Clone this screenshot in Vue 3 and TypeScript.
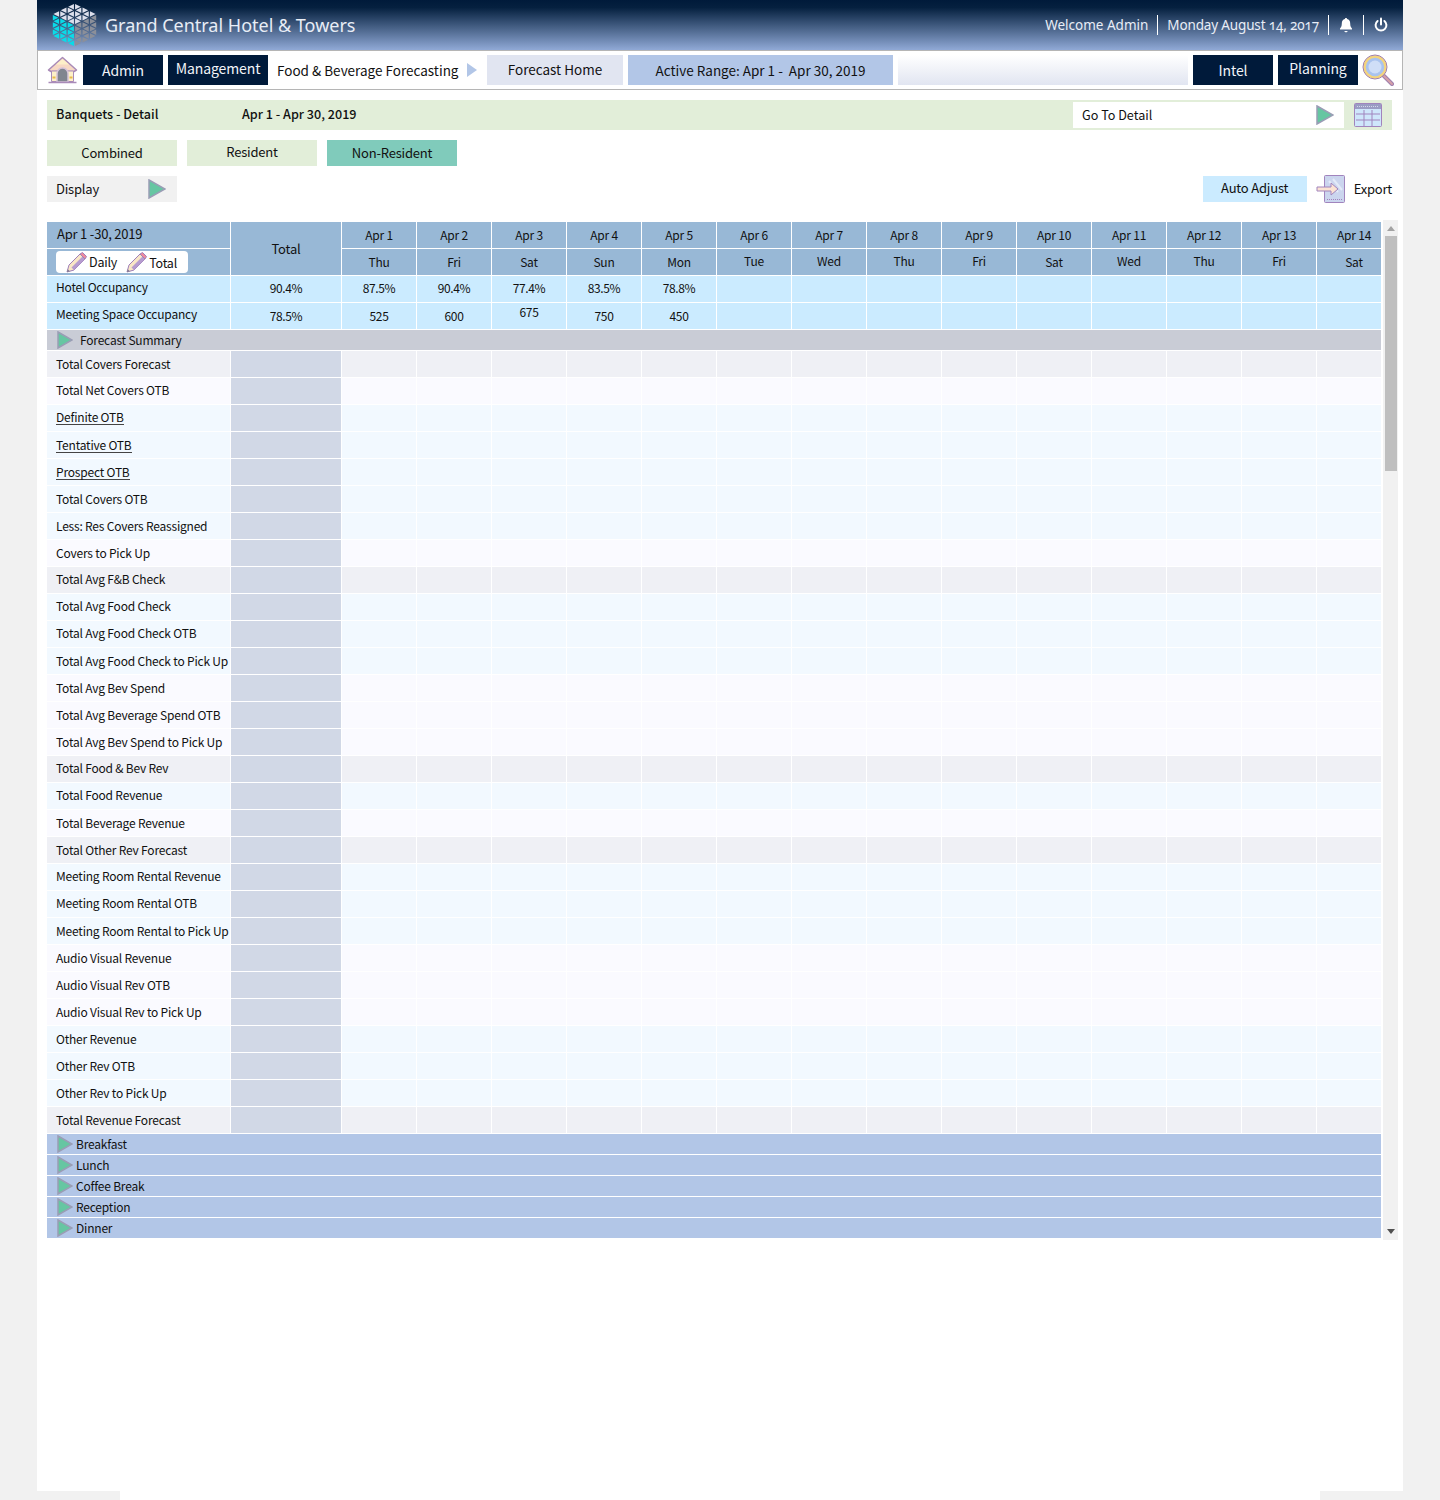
<script setup lang="ts">
const lowWeekdays = [0, 1, 2, 3, 4, 9, 13]
const days = ['Thu', 'Fri', 'Sat', 'Sun', 'Mon', 'Tue', 'Wed', 'Thu', 'Fri', 'Sat', 'Wed', 'Thu', 'Fri', 'Sat'].map(
  (weekday, i) => ({ date: `Apr ${i + 1}`, weekday, low: lowWeekdays.includes(i) }),
)

const occupancy = [
  { label: 'Hotel Occupancy', total: '90.4%', values: ['87.5%', '90.4%', '77.4%', '83.5%', '78.8%'], high: true },
  { label: 'Meeting Space Occupancy', total: '78.5%', values: ['525', '600', '675', '750', '450'], high: false },
]

// g = grey total row, l = lavender, b = light blue
const rows: [string, string, boolean?][] = [
  ['Total Covers Forecast', 'g'],
  ['Total Net Covers OTB', 'l'],
  ['Definite OTB', 'b', true],
  ['Tentative OTB', 'b', true],
  ['Prospect OTB', 'b', true],
  ['Total Covers OTB', 'b'],
  ['Less: Res Covers Reassigned', 'b'],
  ['Covers to Pick Up', 'l'],
  ['Total Avg F&B Check', 'g'],
  ['Total Avg Food Check', 'b'],
  ['Total Avg Food Check OTB', 'b'],
  ['Total Avg Food Check to Pick Up', 'b'],
  ['Total Avg Bev Spend', 'l'],
  ['Total Avg Beverage Spend OTB', 'l'],
  ['Total Avg Bev Spend to Pick Up', 'l'],
  ['Total Food & Bev Rev', 'g'],
  ['Total Food Revenue', 'b'],
  ['Total Beverage Revenue', 'l'],
  ['Total Other Rev Forecast', 'g'],
  ['Meeting Room Rental Revenue', 'b'],
  ['Meeting Room Rental OTB', 'b'],
  ['Meeting Room Rental to Pick Up', 'b'],
  ['Audio Visual Revenue', 'l'],
  ['Audio Visual Rev OTB', 'l'],
  ['Audio Visual Rev to Pick Up', 'l'],
  ['Other Revenue', 'b'],
  ['Other Rev OTB', 'b'],
  ['Other Rev to Pick Up', 'b'],
  ['Total Revenue Forecast', 'g'],
]

// these labels sit a pixel higher in their row
const raised = new Set([
  'Total Net Covers OTB', 'Definite OTB', 'Total Avg F&B Check', 'Total Avg Food Check',
  'Total Avg Food Check OTB', 'Total Food & Bev Rev', 'Total Food Revenue',
  'Meeting Room Rental Revenue', 'Meeting Room Rental OTB',
])

const groups = ['Breakfast', 'Lunch', 'Coffee Break', 'Reception', 'Dinner']

// logo: pointy-top hexagon cut into triangles with a vertical edge
const side = 8
const w = (side * Math.sqrt(3)) / 2
const logo: { points: string; fill: string }[] = []
for (let i = -3; i < 3; i++) {
  for (let n = -5; n < 5; n++) {
    const odd = (k: number) => (Math.abs(k) % 2) / 2
    const y1 = (n + odd(i)) * side
    const y2 = (n + odd(i + 1)) * side
    const tris = [
      [[i * w, y1], [i * w, y1 + side], [(i + 1) * w, y1 + side / 2]],
      [[(i + 1) * w, y2], [(i + 1) * w, y2 + side], [i * w, y2 + side / 2]],
    ]
    for (const t of tris) {
      const cx = (t[0][0] + t[1][0] + t[2][0]) / 3
      const cy = (t[0][1] + t[1][1] + t[2][1]) / 3
      const slope = (Math.abs(cx) * (side / 2)) / w
      if (Math.abs(cy) + slope > 3 * side) continue
      let fill = cx < 0 ? '#0adbe8' : '#8b8f99'
      if (-cy > slope) fill = '#dcdfec'
      logo.push({
        points: t.map(p => `${(cx + (p[0] - cx) * 0.76).toFixed(2)},${(cy + (p[1] - cy) * 0.76).toFixed(2)}`).join(' '),
        fill,
      })
    }
  }
}
</script>

<template>
  <div class="page">
    <header class="header">
      <svg class="logo" viewBox="-21 -24 42 48" preserveAspectRatio="none">
        <polygon v-for="(t, i) in logo" :key="i" :points="t.points" :fill="t.fill" />
      </svg>
      <div class="hotel">Grand Central Hotel &amp; Towers</div>
      <div class="welcome">Welcome Admin</div>
      <div class="date">Monday August 14, 2017</div>
      <div class="head-icon">
        <svg width="16" height="16" viewBox="0 0 16 16">
          <path d="M8 1c.7 0 1.100.5 1.100 1.100 2 .5 3.100 2.200 3.100 4.400 0 2.700.6 3.700 1.800 5v1H2v-1c1.200-1.300 1.800-2.300 1.800-5 0-2.200 1.100-3.900 3.100-4.400C6.900 1.500 7.300 1 8 1zM6.300 14h3.400c-.2.800-.9 1.300-1.700 1.300S6.500 14.800 6.300 14z" fill="#fff" />
        </svg>
      </div>
      <div class="head-icon last">
        <svg width="16" height="16" viewBox="0 0 16 16" fill="none" stroke="#fff" stroke-width="2" stroke-linecap="round">
          <path d="M8 1.500v6" />
          <path d="M4.600 4a5.400 5.400 0 1 0 6.800 0" />
        </svg>
      </div>
    </header>

    <nav class="nav">
      <svg class="home" width="31" height="28" viewBox="0 0 31 28">
        <path d="M1.500 14 15.500 1.500 29.500 14l-2.500 1.500H4z" fill="#f7d9c4" stroke="#a98bb8" stroke-width="1.500" stroke-linejoin="round" />
        <path d="M9 8.500 15.500 3 22 8.500z" fill="#fdf0c8" />
        <path d="M4.500 15h22v10.500h-22z" fill="#fdf0c8" stroke="#a98bb8" />
        <path d="M10 26V17.500a5.500 5.500 0 0 1 11 0V26z" fill="#80858f" stroke="#d5c3d8" stroke-width="1.500" />
        <path d="M5.500 20.500h3v2h-3zM22.500 20.500h3v2h-3z" fill="#e8b94a" />
        <path d="M1.500 26.500h28" stroke="#a98bb8" stroke-width="1.500" />
      </svg>
      <div class="nav-dark admin">Admin</div>
      <div class="nav-dark mgmt"><span class="lift2">Management</span></div>
      <div class="crumb">Food &amp; Beverage Forecasting</div>
      <svg class="crumb-arrow" width="10" height="14" viewBox="0 0 10 14"><path d="M0 0l10 7-10 7z" fill="#b2c6e7" /></svg>
      <div class="forecast-home">Forecast Home</div>
      <div class="active-range">Active Range: Apr 1 -&nbsp; Apr 30, 2019</div>
      <div class="nav-fill"></div>
      <div class="nav-dark admin">Intel</div>
      <div class="nav-dark admin"><span class="lift2">Planning</span></div>
      <svg class="glass" width="32" height="32" viewBox="0 0 32 32">
        <path d="M22 22l8 8" stroke="#9f7fae" stroke-width="4" stroke-linecap="round" />
        <path d="M22 22l8 8" stroke="#d6a0a8" stroke-width="2" stroke-linecap="round" />
        <circle cx="13" cy="13" r="10.500" fill="#a9c3ee" stroke="#f4d47c" stroke-width="2.500" />
        <circle cx="13" cy="13" r="12" fill="none" stroke="#9f7fae" stroke-width="1" />
        <circle cx="13" cy="13" r="6.500" fill="#cfdef7" />
      </svg>
    </nav>

    <section class="content">
      <div class="title-bar">
        <div class="title">Banquets - Detail</div>
        <div class="title-range">Apr 1 - Apr 30, 2019</div>
        <div class="goto">
          <span class="lift1">Go To Detail</span>
          <svg class="play" width="18" height="20" viewBox="0 0 18 20"><path d="M1 1l16 9-16 9z" fill="#66c6a2" stroke="#9a9db5" stroke-width="1.500" /></svg>
        </div>
        <svg class="calendar" width="28" height="24" viewBox="0 0 28 24">
          <rect x=".5" y=".5" width="27" height="23" rx="1" fill="#cfe6fb" stroke="#a184bd" />
          <path d="M1 1h26v5H1z" fill="#9b9dc4" />
          <path d="M3 3.500h22" stroke="#d5d8ea" stroke-dasharray="1 1" />
          <path d="M2 11h24M2 17h24M10 7v16M18 7v16" stroke="#a184bd" fill="none" />
        </svg>
      </div>

      <div class="tabs">
        <div class="tab">Combined</div>
        <div class="tab"><span class="lift1">Resident</span></div>
        <div class="tab current">Non-Resident</div>
      </div>

      <div class="tools">
        <div class="display">
          <span class="lift1">Display</span>
          <svg width="18" height="20" viewBox="0 0 18 20"><path d="M1 1l16 9-16 9z" fill="#66c6a2" stroke="#9a9db5" stroke-width="1.500" /></svg>
        </div>
        <div class="auto-adjust"><span class="lift1">Auto Adjust</span></div>
        <svg class="export-icon" width="30" height="28" viewBox="0 0 30 28">
          <rect x="8.500" y=".5" width="20" height="27" rx="1" fill="#cbd5ee" stroke="#a184bd" />
          <path d="M13 6l9 11M17 4l9 11" stroke="#e3eaf8" stroke-width="2" />
          <path d="M11 24.500h15" stroke="#a184bd" stroke-dasharray="1 1" />
          <path d="M1 12h14V8l7 6-7 6v-4H1z" fill="#fbe3d3" stroke="#a184bd" stroke-linejoin="round" />
        </svg>
        <div class="export lift1">Export</div>
      </div>

      <div class="table-wrap">
        <div class="grid">
          <div class="cell head label-cell range"><span class="lift1">Apr 1 -30, 2019</span></div>
          <div class="cell head total-head">Total</div>
          <div
            v-for="(d, i) in days"
            :key="d.date"
            class="cell head center"
            :class="{ 'last-day': i === 13 }"
          >
            {{ d.date }}
          </div>

          <div class="cell head toggle-cell">
            <div class="toggle">
              <svg width="21" height="21" viewBox="0 0 21 21">
                <path d="M1 20l2-7L14 2l5 5L8 18z" fill="#f9e7c6" stroke="#9f7fb8" stroke-linejoin="round" />
                <path d="M5.500 15.500 16.500 4.500 19 7 8 18z" fill="#b69ccf" />
                <path d="M14 2l2.500-1.500 4 4L19 7z" fill="#ef8a9c" stroke="#9f7fb8" stroke-linejoin="round" />
                <path d="M1 20l.8-2.800 2 2z" fill="#807a8c" />
              </svg>
              <span class="toggle-a">Daily</span>
              <svg width="21" height="21" viewBox="0 0 21 21">
                <path d="M1 20l2-7L14 2l5 5L8 18z" fill="#f9e7c6" stroke="#9f7fb8" stroke-linejoin="round" />
                <path d="M5.500 15.500 16.500 4.500 19 7 8 18z" fill="#b69ccf" />
                <path d="M14 2l2.500-1.500 4 4L19 7z" fill="#ef8a9c" stroke="#9f7fb8" stroke-linejoin="round" />
                <path d="M1 20l.8-2.800 2 2z" fill="#807a8c" />
              </svg>
              <span class="toggle-b">Total</span>
            </div>
          </div>
          <div
            v-for="(d, i) in days"
            :key="d.weekday + d.date"
            class="cell head center"
            :class="{ 'last-day': i === 13 }"
          >
            <span :class="{ lift1: !d.low }">{{ d.weekday }}</span>
          </div>

          <template v-for="o in occupancy" :key="o.label">
            <div class="cell occ label-cell"><span class="lift2">{{ o.label }}</span></div>
            <div class="cell occ center num"><span :class="{ lift1: o.high }">{{ o.total }}</span></div>
            <div v-for="(d, i) in days" :key="d.date" class="cell occ center num">
              <span :class="{ shifted: o.values[i] === '675', lift1: o.high }">{{ o.values[i] }}</span>
            </div>
          </template>

          <div class="band summary">
            <svg width="16" height="18" viewBox="0 0 16 18"><path d="M1 1l14 8-14 8z" fill="#66c6a2" stroke="#9a9db5" stroke-width="1.500" /></svg>
            <span class="summary-text">Forecast Summary</span>
          </div>

          <template v-for="r in rows" :key="r[0]">
            <div class="cell label-cell" :class="'row-' + r[1]">
              <span :class="{ link: r[2], lift1: raised.has(r[0]) }">{{ r[0] }}</span>
            </div>
            <div class="cell total-col"></div>
            <div v-for="d in days" :key="d.date" class="cell" :class="'row-' + r[1]"></div>
          </template>

          <div v-for="g in groups" :key="g" class="band group">
            <svg width="16" height="18" viewBox="0 0 16 18"><path d="M1 1l14 8-14 8z" fill="#66c6a2" stroke="#9a9db5" stroke-width="1.500" /></svg>
            <span>{{ g }}</span>
          </div>
        </div>

        <div class="scrollbar">
          <div class="arrow up"></div>
          <div class="thumb"></div>
          <div class="arrow down"></div>
        </div>
      </div>
    </section>
  </div>
  <div class="foot"></div>
</template>

<style>
body {
  background: #f1f1f1;
}
</style>

<style scoped>
.page {
  width: 1366px;
  height: 1491px;
  margin: 0 auto;
  background: #fff;
  color: #111;
  font-family: "Noto Sans CJK JP", "Noto Sans", sans-serif;
  font-size: 13px;
  letter-spacing: -0.2px;
}

.foot {
  width: 1200px;
  height: 9px;
  margin: 0 auto;
  background: #fff;
}

.header {
  display: flex;
  align-items: center;
  height: 50px;
  padding-left: 15px;
  background: linear-gradient(#001a3a 0%, #05203f 15%, #90a9d6 100%);
  color: #e8edf6;
  font-family: "Noto Sans", sans-serif;
  letter-spacing: 0;
}

.logo {
  width: 45px;
  height: 44px;
  flex: none;
}

.hotel {
  margin-left: 8px;
  margin-right: auto;
  font-size: 18px;
}

.welcome,
.date {
  font-size: 13.500px;
  font-variant-numeric: oldstyle-nums;
  height: 20px;
  line-height: 21px;
}

.welcome {
  padding-right: 9px;
  border-right: 1px solid #fff;
}

.date {
  padding: 0 9px 0 9px;
  letter-spacing: -0.15px;
  border-right: 1px solid #fff;
}

.head-icon {
  display: flex;
  justify-content: center;
  align-items: center;
  width: 34px;
  height: 20px;
  border-right: 1px solid #fff;
}

.head-icon.last {
  width: 34px;
  border-right: 0;
  padding-right: 5px;
}

.nav {
  display: flex;
  align-items: center;
  gap: 5px;
  height: 40px;
  padding-left: 9px;
  border: 1px solid #b5b5b5;
  box-sizing: border-box;
  font-size: 13.500px;
  letter-spacing: 0;
}

.home {
  flex: none;
}

.nav-dark {
  display: flex;
  justify-content: center;
  align-items: center;
  width: 80px;
  height: 30px;
  background: #001a3a;
  color: #f2f4f8;
  font-size: 14px;
  letter-spacing: -0.1px;
}

.nav-dark.mgmt {
  width: 100px;
}

.lift2 {
  position: relative;
  top: -2px;
}

.lift1 {
  position: relative;
  top: -1px;
}

.crumb {
  width: 181px;
  margin-left: 4px;
  white-space: nowrap;
}

.crumb-arrow {
  margin-left: 4px;
  margin-right: 5px;
  flex: none;
}

.forecast-home {
  width: 136px;
  height: 30px;
  line-height: 28px;
  text-align: center;
  background: #e1e5f1;
}

.active-range {
  width: 265px;
  height: 30px;
  line-height: 30px;
  text-align: center;
  background: #b2c6e7;
}

.nav-fill {
  width: 290px;
  height: 30px;
  background: linear-gradient(#fff, #e1e5f1);
}

.glass {
  margin-left: -1px;
  flex: none;
}

.content {
  padding: 10px 5px 0 10px;
}

.title-bar {
  display: flex;
  align-items: center;
  width: 1345px;
  height: 30px;
  background: #e2eed9;
  font-size: 12.600px;
  font-weight: 500;
  letter-spacing: 0;
}

.title {
  width: 186px;
  padding-left: 9px;
  padding-bottom: 4px;
  box-sizing: border-box;
}

.title-range {
  margin-right: auto;
  padding-left: 9px;
  padding-bottom: 4px;
}

.goto {
  display: flex;
  align-items: center;
  justify-content: space-between;
  width: 271px;
  height: 26px;
  padding: 0 10px 0 9px;
  box-sizing: border-box;
  background: #fff;
  font-weight: 400;
}

.calendar {
  margin: 0 10px;
  flex: none;
}

.tabs {
  display: flex;
  gap: 10px;
  margin-top: 10px;
}

.tab {
  width: 130px;
  height: 26px;
  line-height: 26px;
  text-align: center;
  background: #e2eed9;
}

.tab.current {
  background: #80cbbb;
}

.tools {
  display: flex;
  align-items: center;
  width: 1345px;
  height: 26px;
  margin-top: 10px;
}

.display {
  display: flex;
  justify-content: space-between;
  align-items: center;
  width: 130px;
  height: 26px;
  margin-right: auto;
  padding: 0 11px 0 9px;
  box-sizing: border-box;
  background: #f1f1f1;
}

.auto-adjust {
  width: 104px;
  height: 26px;
  line-height: 26px;
  text-align: center;
  background: #cbebff;
}

.export-icon {
  margin-left: 9px;
  flex: none;
}

.export {
  margin-left: 8px;
}

.table-wrap {
  display: flex;
  align-items: center;
  gap: 2px;
  margin-top: 18px;
}

.grid {
  display: grid;
  grid-template-columns: 183px 110px repeat(13, 74px) 64px;
  gap: 1px;
  width: 1334px;
  font-size: 12px;
  line-height: 16px;
}

.cell {
  display: flex;
  align-items: center;
  height: 26px;
  white-space: nowrap;
}

.center {
  justify-content: center;
}

.last-day {
  padding-left: 10px;
  box-sizing: border-box;
}

.label-cell {
  padding-left: 9px;
  box-sizing: border-box;
}

.head {
  background: #98b8d6;
}

.range {
  padding-left: 10px;
  font-size: 13px;
}

.total-head {
  grid-row: span 2;
  height: 53px;
  justify-content: center;
  font-size: 13px;
}

.toggle-cell {
  padding-left: 9px;
}

.toggle {
  display: flex;
  align-items: center;
  width: 132px;
  height: 22px;
  padding-left: 10px;
  box-sizing: border-box;
  border-radius: 4px;
  background: #fff;
  font-size: 12.500px;
}

.toggle-a {
  margin: 0 9px 0 2px;
}

.toggle-b {
  margin: 2px 0 0 2px;
}

.occ {
  background: #cbebff;
}

.num {
  letter-spacing: -0.4px;
}

.shifted {
  position: relative;
  top: -4px;
}

.band {
  grid-column: 1 / -1;
  display: flex;
  align-items: center;
  height: 20px;
  padding-left: 10px;
}

.band svg {
  flex: none;
}

.band span {
  margin-left: 3px;
}

.summary {
  background: #c9ccd6;
}

.band .summary-text {
  margin-left: 7px;
}

.group {
  background: #b2c6e7;
}

.row-g {
  background: #eff0f5;
}

.row-l {
  background: #fafaff;
}

.row-b {
  background: #f2f9ff;
}

.total-col {
  background: #d1d8e6;
}

.link {
  border-bottom: 1px solid #444;
  line-height: 15px;
}

.scrollbar {
  position: relative;
  width: 15px;
  height: 1020px;
  background: #f1f1f1;
}

.thumb {
  position: absolute;
  top: 16px;
  left: 2px;
  width: 12px;
  height: 235px;
  background: #bfbfbf;
}

.arrow {
  position: absolute;
  left: 4px;
  width: 0;
  height: 0;
  border-left: 4px solid transparent;
  border-right: 4px solid transparent;
}

.arrow.up {
  top: 6px;
  border-bottom: 5px solid #a3a3a3;
}

.arrow.down {
  bottom: 6px;
  border-top: 5px solid #505050;
}
</style>
